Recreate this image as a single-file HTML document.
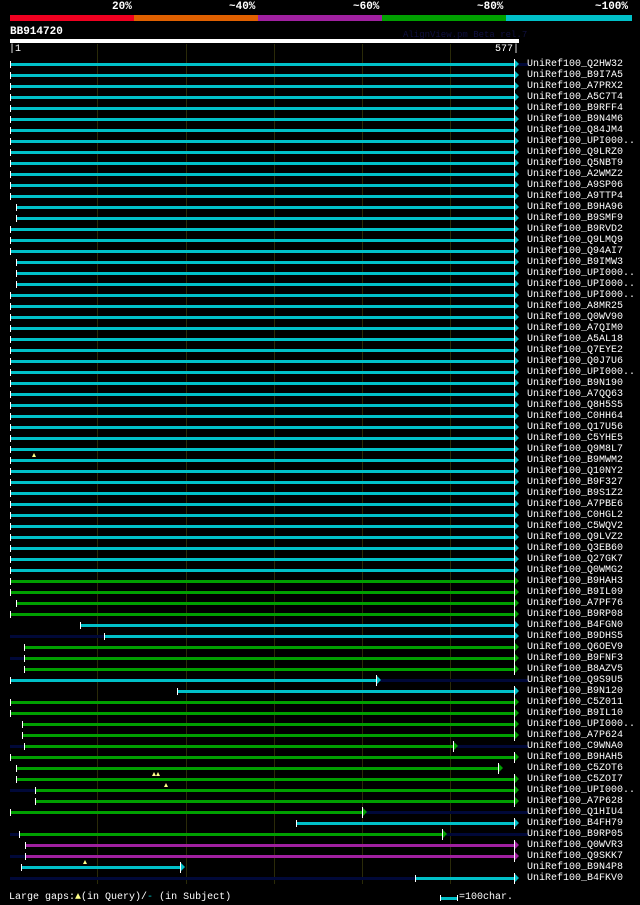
<!DOCTYPE html>
<html><head><meta charset="utf-8"><style>
body{margin:0;background:#000;width:640px;height:905px;overflow:hidden;position:relative;font-family:"Liberation Mono",monospace;color:#fff}
.a{position:absolute}
pre{position:absolute;left:527px;top:59px;margin:0;font:10px/11px "Liberation Mono",monospace;color:#fff}
.p{position:absolute;top:1px;font:bold 11px "Liberation Mono",monospace;color:#fff}
</style></head><body>
<div class="p" style="left:112px">20%</div>
<div class="p" style="left:229px">~40%</div>
<div class="p" style="left:353px">~60%</div>
<div class="p" style="left:477px">~80%</div>
<div class="p" style="left:595px">~100%</div>
<div class="a" style="left:10px;top:15px;width:124px;height:6px;background:#f00020"></div>
<div class="a" style="left:134px;top:15px;width:124px;height:6px;background:#e06000"></div>
<div class="a" style="left:258px;top:15px;width:124px;height:6px;background:#a020a0"></div>
<div class="a" style="left:382px;top:15px;width:124px;height:6px;background:#00a000"></div>
<div class="a" style="left:506px;top:15px;width:126px;height:6px;background:#00c0c8"></div>
<div class="a" style="left:10px;top:26px;font:bold 11px 'Liberation Mono',monospace">BB914720</div>
<div class="a" style="left:403px;top:30px;font:9px 'Liberation Mono',monospace;color:#101040">AlignView.pm Beta rel.7</div>
<div class="a" style="left:10px;top:39px;width:509px;height:4px;background:#fff"></div>
<div class="a" style="left:9px;top:44px;font:10px 'Liberation Mono',monospace">|1</div>
<div class="a" style="left:495px;top:44px;font:10px 'Liberation Mono',monospace">577|</div>
<div id="g"></div>
<pre>UniRef100_Q2HW32
UniRef100_B9I7A5
UniRef100_A7PRX2
UniRef100_A5C7T4
UniRef100_B9RFF4
UniRef100_B9N4M6
UniRef100_Q84JM4
UniRef100_UPI000..
UniRef100_Q9LRZ0
UniRef100_Q5NBT9
UniRef100_A2WMZ2
UniRef100_A9SP06
UniRef100_A9TTP4
UniRef100_B9HA96
UniRef100_B9SMF9
UniRef100_B9RVD2
UniRef100_Q9LMQ9
UniRef100_Q94AI7
UniRef100_B9IMW3
UniRef100_UPI000..
UniRef100_UPI000..
UniRef100_UPI000..
UniRef100_A8MR25
UniRef100_Q0WV90
UniRef100_A7QIM0
UniRef100_A5AL18
UniRef100_Q7EYE2
UniRef100_Q0J7U6
UniRef100_UPI000..
UniRef100_B9N190
UniRef100_A7QQ63
UniRef100_Q8H5S5
UniRef100_C0HH64
UniRef100_Q17U56
UniRef100_C5YHE5
UniRef100_Q9M8L7
UniRef100_B9MWM2
UniRef100_Q10NY2
UniRef100_B9F327
UniRef100_B9S1Z2
UniRef100_A7PBE6
UniRef100_C0HGL2
UniRef100_C5WQV2
UniRef100_Q9LVZ2
UniRef100_Q3EB60
UniRef100_Q27GK7
UniRef100_Q0WMG2
UniRef100_B9HAH3
UniRef100_B9IL09
UniRef100_A7PF76
UniRef100_B9RP08
UniRef100_B4FGN0
UniRef100_B9DHS5
UniRef100_Q6OEV9
UniRef100_B9FNF3
UniRef100_B8AZV5
UniRef100_Q9S9U5
UniRef100_B9N120
UniRef100_C5Z011
UniRef100_B9IL10
UniRef100_UPI000..
UniRef100_A7P624
UniRef100_C9WNA0
UniRef100_B9HAH5
UniRef100_C5ZOT6
UniRef100_C5ZOI7
UniRef100_UPI000..
UniRef100_A7P628
UniRef100_Q1HIU4
UniRef100_B4FH79
UniRef100_B9RP05
UniRef100_Q0WVR3
UniRef100_Q9SKK7
UniRef100_B9N4P8
UniRef100_B4FKV0</pre>
<div class="a" style="left:9px;top:892px;font:10px 'Liberation Mono',monospace">Large gaps:<span style="color:#ff8">&#9650;</span>(in Query)/<span style="color:#0cc">-</span> (in Subject)</div>
<div class="a" style="left:440px;top:895px;height:6px;border-left:1px solid #fff"></div>
<div class="a" style="left:441px;top:897px;width:16px;height:3px;background:#00c0c8"></div>
<div class="a" style="left:457px;top:895px;height:6px;border-left:1px solid #fff"></div>
<div class="a" style="left:459px;top:892px;font:10px 'Liberation Mono',monospace">=100char.</div>
<script>
var C={c:'#00c0c8',g:'#00a000',m:'#a020a0'};
var R=[];
for(var i=0;i<47;i++)R.push(['c',10,514]);
R[13][1]=16;R[14][1]=16;R[18][1]=16;R[19][1]=16;R[20][1]=16;
R.push(['g',10,514],['g',10,514],['g',16,514],['g',10,514],['c',80,514],['c',104,514,1],
['g',24,514],['g',24,514,1],['g',24,514],['c',10,376,0,1],['c',177,514],['g',10,514],['g',10,514],
['g',22,514],['g',22,514],['g',24,453,1,1],['g',10,514],['g',16,498],['g',16,514],['g',35,514,1],['g',35,514],
['g',10,362,0,1],['c',296,514],['g',19,442,1,1],['m',25,514],['m',25,514,1],['c',21,180],['c',415,514,1]);
var h='';
[97,186,274,362,450].forEach(function(x){h+='<div class="a" style="left:'+x+'px;top:44px;width:1px;height:840px;background:#2a2a08"></div>'});
R.forEach(function(r,i){var y=64+11*i;var col=C[r[0]];
if(r[3])h+='<div class="a" style="left:10px;top:'+(y-1)+'px;width:'+(r[1]-10)+'px;height:3px;background:#000838"></div>';
if(r[4]||r[0]=='c'&&i==0)h+='<div class="a" style="left:'+(r[2]+4)+'px;top:'+(y-1)+'px;width:'+(524-r[2])+'px;height:3px;background:#000838"></div>';
h+='<div class="a" style="left:'+r[1]+'px;top:'+(y-1)+'px;width:'+(r[2]-r[1])+'px;height:3px;background:'+col+'"></div>';
h+='<div class="a" style="left:'+r[1]+'px;top:'+(y-3)+'px;width:1px;height:7px;background:#fff"></div>';
h+='<div class="a" style="left:'+r[2]+'px;top:'+(y-5)+'px;width:1px;height:11px;background:#fff"></div>';
h+='<div class="a" style="left:'+(r[2]+1)+'px;top:'+(y-4)+'px;width:0;height:0;border-top:4px solid transparent;border-bottom:4px solid transparent;border-left:4px solid '+col+'"></div>';
});
[[32,453],[152,772],[156,772],[164,783],[83,860]].forEach(function(p){h+='<div class="a" style="left:'+p[0]+'px;top:'+p[1]+'px;width:0;height:0;border-left:2px solid transparent;border-right:2px solid transparent;border-bottom:4px solid #ff8"></div>'});
document.getElementById('g').innerHTML=h;
</script>
</body></html>
